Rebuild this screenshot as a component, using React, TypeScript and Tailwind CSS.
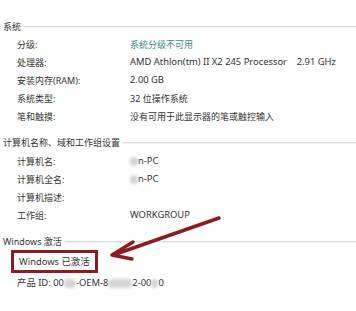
const font = { fontFamily: '"Noto Sans", "Noto Sans CJK SC", sans-serif' };

type Row = { label: string; value: React.ReactNode; teal?: boolean; latin?: boolean };

function SectionHeader({ title, className = '' }: { title: string; className?: string }) {
  return (
    <div className={`flex h-[18px] items-center pl-[3px] ${className}`}>
      <span className="whitespace-nowrap text-[9px] leading-none text-[#333]">{title}</span>
      <div className="ml-[3px] h-px flex-1 bg-[#dcdcdc] shadow-[0_1px_0_#f2f2f2]" />
    </div>
  );
}

function InfoRow({ label, value, teal, latin }: Row) {
  return (
    <div className="flex h-[18px] items-center text-[9px] leading-none">
      <span className="w-[130px] shrink-0 pl-[17px] text-[#333]">{label}</span>
      <span
        className={`whitespace-nowrap ${latin ? 'text-[9.4px]' : ''} ${teal ? 'text-[#3d8b8e]' : 'text-[#333]'}`}
      >
        {value}
      </span>
    </div>
  );
}

function Blur({ w }: { w: number }) {
  return <span className="inline-block h-[9px] rounded-sm bg-[#d4d4d4] align-middle blur-[1.5px]" style={{ width: w }} />;
}

export default function App() {
  const system: Row[] = [
    { label: '分级:', value: '系统分级不可用', teal: true },
    { label: '处理器:', value: <>AMD Athlon(tm) II X2 245 Processor&nbsp;&nbsp;&nbsp;&nbsp;2.91 GHz</>, latin: true },
    { label: '安装内存(RAM):', value: '2.00 GB', latin: true },
    { label: '系统类型:', value: '32 位操作系统' },
    { label: '笔和触摸:', value: '没有可用于此显示器的笔或触控输入' },
  ];

  const computer: Row[] = [
    { label: '计算机名:', value: <><Blur w={8} />n-PC</>, latin: true },
    { label: '计算机全名:', value: <><Blur w={8} />n-PC</>, latin: true },
    { label: '计算机描述:', value: '' },
    { label: '工作组:', value: 'WORKGROUP', latin: true },
  ];

  return (
    <div className="relative h-[311px] w-[356px] overflow-hidden bg-white pt-[17px]" style={font}>
      <SectionHeader title="系统" />
      {system.map((r) => (
        <InfoRow key={r.label} {...r} />
      ))}

      <SectionHeader title="计算机名称、域和工作组设置" className="mt-[8px]" />
      <div className="mt-px">
        {computer.map((r) => (
          <InfoRow key={r.label} {...r} />
        ))}
      </div>

      <SectionHeader title="Windows 激活" className="mt-[8px] h-[17px]" />
      <div className="ml-[11px] flex h-[23px] w-[87px] items-center border-[3px] border-[#8a1c24] pl-[5px] text-[9.4px] leading-none text-[#333]">
        Windows 已激活
      </div>
      <div className="flex h-[20px] items-center pl-[17px] text-[9.4px] leading-none text-[#333]">
        <span className="whitespace-nowrap">
          产品 ID: 00<Blur w={12} />-OEM-8<Blur w={24} />2-00<Blur w={7} />0
        </span>
      </div>

      {/* annotation arrow */}
      <svg className="pointer-events-none absolute left-0 top-0" width="356" height="311">
        <line x1="219" y1="218" x2="116" y2="254" stroke="#8a1c24" strokeWidth="3.5" strokeLinecap="round" />
        <polyline
          points="133,242 112,255 132,259"
          fill="none"
          stroke="#8a1c24"
          strokeWidth="3.5"
          strokeLinecap="round"
          strokeLinejoin="round"
        />
      </svg>
    </div>
  );
}
